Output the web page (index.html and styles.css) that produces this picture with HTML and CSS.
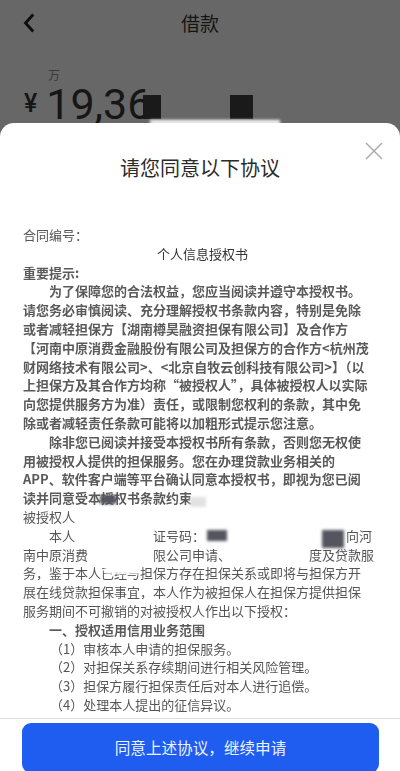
FILE: index.html
```html
<!DOCTYPE html>
<html lang="zh-CN">
<head>
    <meta charset="UTF-8">
    <meta name="viewport" content="width=device-width, initial-scale=1.0">
    <title>借款</title>
    <link rel="stylesheet" href="styles.css">
</head>
<body>

    <header class="topbar">
        <svg class="back-icon" width="12" height="20" viewBox="0 0 12 20">
            <path d="M10.2 1.5 L2.5 10 L10.2 18.5" fill="none" stroke="#0d0d0d" stroke-width="2.8"/>
        </svg>
        <h1>借款</h1>
    </header>

    <div class="amount">
        <span class="amount-unit">万</span>
        <div class="amount-row">
            <span class="currency">¥</span>
            <span class="amount-value">19,36</span>
        </div>
        <span class="square square-one"></span>
        <span class="square square-two"></span>
        <span class="streak"></span>
    </div>

    <div class="sheet">
        <h2>请您同意以下协议</h2>
        <svg class="close-icon" width="18" height="18" viewBox="0 0 18 18">
            <path d="M1 1 L17 17 M17 1 L1 17" fill="none" stroke="#ababab" stroke-width="1.5"/>
        </svg>

        <div class="contract">
            <p>合同编号：</p>
            <p class="contract-title">个人信息授权书</p>
            <p class="strong">重要提示:</p>
            <p class="strong indent">为了保障您的合法权益，您应当阅读并遵守本授权书。<br>
                请您务必审慎阅读、充分理解授权书条款内容，特别是免除<br>
                或者减轻担保方【湖南樽昊融资担保有限公司】及合作方<br>
                【河南中原消费金融股份有限公司及担保方的合作方&lt;杭州茂<br>
                财网络技术有限公司&gt;、&lt;北京自牧云创科技有限公司&gt;】（以<br>
                上担保方及其合作方均称“被授权人”，具体被授权人以实际<br>
                向您提供服务方为准）责任，或限制您权利的条款，其中免<br>
                除或者减轻责任条款可能将以加粗形式提示您注意。</p>
            <p class="strong indent">除非您已阅读并接受本授权书所有条款，否则您无权使<br>
                用被授权人提供的担保服务。您在办理贷款业务相关的<br>
                APP、软件客户端等平台确认同意本授权书，即视为您已阅<br>
                读并同意受本授权书条款约束。</p>
            <p>被授权人</p>
            <p class="indent">本人<span class="gap gap-name"></span>证号码：<span class="gap gap-number"></span>向河<br>
                南中原消费<span class="gap gap-lender"></span>限公司申请、<span class="gap gap-credit"></span>度及贷款服<br>
                务，鉴于本人已经与担保方存在担保关系或即将与担保方开<br>
                展在线贷款担保事宜，本人作为被担保人在担保方提供担保<br>
                服务期间不可撤销的对被授权人作出以下授权：</p>
            <p class="strong indent">一、授权适用信用业务范围</p>
            <ol class="terms">
                <li>（1）审核本人申请的担保服务。</li>
                <li>（2）对担保关系存续期间进行相关风险管理。</li>
                <li>（3）担保方履行担保责任后对本人进行追偿。</li>
                <li>（4）处理本人提出的征信异议。</li>
                <li>（5）其他法律法规规定或本人授权同意的情形</li>
            </ol>

            <span class="mask mask-dark mask-a"></span>
            <span class="mask mask-light mask-b"></span>
            <span class="mask mask-white mask-e"></span>
            <span class="mask mask-dark mask-h"></span>
            <span class="mask mask-dark mask-i"></span>
        </div>

        <div class="sheet-footer">
            <button type="button">同意上述协议，继续申请</button>
        </div>
    </div>

</body>
</html>
```

FILE: styles.css
```css
* {
    box-sizing: border-box;
}

body {
    font-family: 'Noto Sans CJK SC', 'Liberation Sans', sans-serif;
    margin: 0;
    padding: 0;
    height: 771px;
    overflow: hidden;
    position: relative;
    background-color: #676767;
    color: #111;
}

.topbar {
    height: 48px;
    padding-bottom: 3px;
    display: flex;
    align-items: center;
    justify-content: center;
    position: relative;
}

.topbar h1 {
    margin: 0;
    font-size: 19px;
    font-weight: 400;
    color: #151515;
}

.back-icon {
    position: absolute;
    left: 23px;
    top: 13px;
}

.amount {
    position: relative;
    padding: 19px 0 0 24px;
}

.amount-unit {
    display: block;
    margin-left: 24px;
    font-size: 12px;
    line-height: 15px;
    color: #3a3a3a;
}

.amount-row {
    display: flex;
    align-items: center;
    gap: 9px;
    margin-top: 4px;
    font-family: 'Roboto', 'Liberation Sans', sans-serif;
    color: #161616;
}

.currency {
    font-size: 25px;
    line-height: 36px;
    font-weight: 500;
}

.amount-value {
    font-size: 43px;
    line-height: 36px;
    font-weight: 400;
}

.square {
    position: absolute;
    top: 47px;
    width: 23px;
    height: 24px;
    background-color: #1a1a1a;
}

.square-one {
    left: 143px;
    width: 18px;
}

.square-two {
    left: 230px;
}

.streak {
    position: absolute;
    left: 150px;
    top: 72px;
    width: 130px;
    height: 4px;
    background-color: #fff;
    filter: blur(1.5px);
}

.sheet {
    position: absolute;
    top: 123px;
    left: 0;
    right: 0;
    bottom: 0;
    display: flex;
    flex-direction: column;
    background-color: #fff;
    border-radius: 14px 14px 0 0;
    overflow: hidden;
}

.sheet h2 {
    flex: none;
    margin: 0;
    padding-top: 31px;
    height: 103px;
    font-size: 20px;
    line-height: 28px;
    font-weight: 400;
    text-align: center;
    color: #2b2b2b;
}

.close-icon {
    position: absolute;
    top: 19px;
    right: 17px;
}

.contract {
    flex: 1;
    position: relative;
    overflow: hidden;
    padding: 0 0 0 23px;
    font-size: 13px;
    line-height: 18.8px;
    white-space: nowrap;
    color: #555;
    filter: blur(0.3px);
}

.contract p {
    margin: 0;
}

.contract-title {
    text-align: center;
    padding-right: 18px;
    color: #333;
}

.strong {
    font-weight: 700;
    color: #5a5a5a;
}

.indent {
    text-indent: 2em;
}

.gap {
    display: inline-block;
}

.gap-name {
    width: 78px;
}

.gap-number {
    width: 141px;
}

.gap-lender {
    width: 65px;
}

.gap-credit {
    width: 78px;
}

.terms {
    list-style: none;
    margin: 0;
    padding: 0 0 0 27px;
}

.mask {
    position: absolute;
    filter: blur(1.5px);
}

.mask-white {
    background-color: #fff;
}

.mask-dark {
    background-color: #55555f;
}

.mask-light {
    background-color: #e2e2e2;
}

.mask-a {
    left: 100px;
    top: 269px;
    width: 16px;
    height: 9px;
}

.mask-b {
    left: 190px;
    top: 271px;
    width: 16px;
    height: 10px;
}

.mask-e {
    left: 105px;
    top: 338px;
    width: 35px;
    height: 10px;
}

.mask-h {
    left: 207px;
    top: 304px;
    width: 20px;
    height: 11px;
}

.mask-i {
    left: 322px;
    top: 304px;
    width: 22px;
    height: 18px;
}

.sheet-footer {
    flex: none;
    height: 53px;
    padding: 4px 21px 0 22px;
    background-color: #fff;
    border-top: 1px solid #dcdcdc;
}

.sheet-footer button {
    display: block;
    width: 100%;
    height: 50px;
    padding: 0 0 3px;
    border: none;
    border-radius: 9px;
    background-color: #1f5cf0;
    color: #eef3ff;
    font-family: inherit;
    font-size: 15.6px;
}
```
